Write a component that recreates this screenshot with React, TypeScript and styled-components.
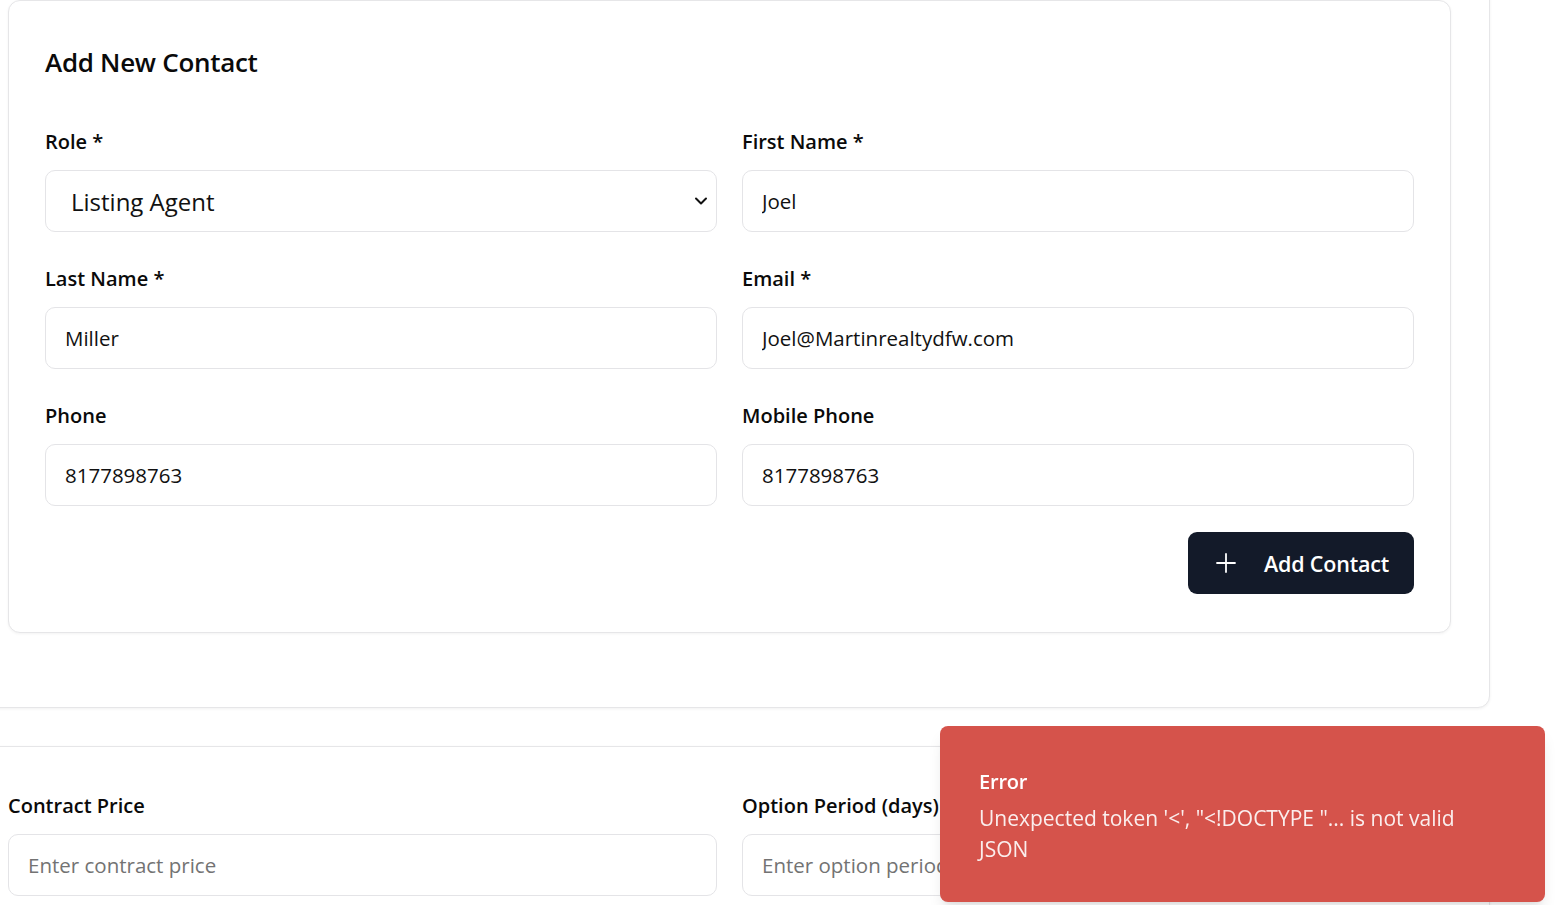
import React from "react";
import styled, { createGlobalStyle } from "styled-components";

const GlobalStyle = createGlobalStyle`
  html, body {
    margin: 0;
    padding: 0;
    background: #ffffff;
    overflow: hidden;
  }
  body {
    font-family: "Open Sans", "Noto Sans", sans-serif;
    color: #0a0a0a;
  }
  * { box-sizing: border-box; }
`;

const Page = styled.div`
  width: 1561px;
  height: 905px;
  overflow: hidden;
  position: relative;
`;

const Stack = styled.div`
  display: flex;
  flex-direction: column;
  gap: 38px;
  width: 1520px;
  margin-left: -30px;
  margin-top: -38px;
`;

const OuterCard = styled.section<{ $bottom: number; $top: number }>`
  background: #fff;
  border: 1px solid #e6e6e8;
  border-radius: 12px;
  box-shadow: 0 1px 3px rgba(0, 0, 0, 0.06);
  padding: ${(p) => p.$top}px 38px ${(p) => p.$bottom}px 37px;
`;

const InnerCard = styled.div`
  background: #fff;
  border: 1px solid #e6e6e8;
  border-radius: 12px;
  box-shadow: 0 1px 3px rgba(0, 0, 0, 0.05);
  padding: 41px 36px 38px 36px;
  display: flex;
  flex-direction: column;
`;

const Title = styled.h2`
  margin: 0 0 44px 0;
  font-size: 26px;
  line-height: 40px;
  font-weight: 600;
  letter-spacing: -0.3px;
  color: #0a0a0a;
`;

const Grid = styled.div`
  display: grid;
  grid-template-columns: 1fr 1fr;
  column-gap: 25px;
  row-gap: 31px;
`;

const Field = styled.div`
  display: flex;
  flex-direction: column;
  gap: 13px;
`;

const Label = styled.label`
  font-size: 20px;
  line-height: 31px;
  font-weight: 600;
  color: #0a0a0a;
`;

const TextInput = styled.input`
  width: 100%;
  height: 62px;
  border: 1px solid #e4e4e7;
  border-radius: 10px;
  padding: 0 19px;
  font-family: "Open Sans", "Noto Sans", sans-serif;
  font-size: 20.5px;
  color: #111111;
  background: #fff;
  outline: none;
  &::placeholder {
    color: #737373;
  }
`;

const SelectWrap = styled.div`
  position: relative;
  width: 100%;
`;

const Select = styled.select`
  width: 100%;
  height: 62px;
  appearance: none;
  -webkit-appearance: none;
  border: 1px solid #e4e4e7;
  border-radius: 10px;
  padding: 0 50px 0 25px;
  font-family: "Open Sans", "Noto Sans", sans-serif;
  font-size: 24px;
  color: #111111;
  background: #fff;
  outline: none;
`;

const Chevron = styled.svg`
  position: absolute;
  right: 8px;
  top: 50%;
  transform: translateY(-50%);
  pointer-events: none;
`;

const Actions = styled.div`
  display: flex;
  justify-content: flex-end;
  margin-top: 26px;
`;

const PrimaryButton = styled.button`
  display: inline-flex;
  align-items: center;
  gap: 28px;
  height: 62px;
  padding: 0 25px 0 28px;
  border: none;
  border-radius: 9px;
  background: #131a29;
  color: #ffffff;
  font-family: "Open Sans", "Noto Sans", sans-serif;
  font-size: 21.5px;
  font-weight: 600;
  letter-spacing: -0.2px;
  cursor: pointer;
`;

const Toast = styled.div`
  position: fixed;
  right: 16px;
  bottom: 3px;
  width: 605px;
  background: #d5534b;
  color: #ffffff;
  border-radius: 8px;
  box-shadow: 0 10px 15px -3px rgba(0, 0, 0, 0.1), 0 4px 6px -4px rgba(0, 0, 0, 0.1);
  padding: 41px 84px 37px 39px;
  display: flex;
  flex-direction: column;
  gap: 6px;
`;

const ToastTitle = styled.div`
  font-size: 20px;
  line-height: 30px;
  font-weight: 600;
  letter-spacing: -0.2px;
`;

const ToastMessage = styled.div`
  font-size: 21px;
  line-height: 31px;
  opacity: 0.9;
`;

const PlusIcon = () => (
  <svg width="20" height="20" viewBox="0 0 20 20" fill="none" stroke="currentColor" strokeWidth="1.8" strokeLinecap="round">
    <path d="M1 10h18M10 1v18" />
  </svg>
);

export default function App() {
  return (
    <Page>
      <GlobalStyle />
      <Stack>
        <OuterCard $top={37} $bottom={74}>
          <InnerCard>
            <Title>Add New Contact</Title>
            <Grid>
              <Field>
                <Label>Role *</Label>
                <SelectWrap>
                  <Select defaultValue="listing">
                    <option value="listing">Listing Agent</option>
                    <option value="buyer">Buyer Agent</option>
                  </Select>
                  <Chevron width="16" height="16" viewBox="0 0 16 16" fill="none" stroke="#111" strokeWidth="2" strokeLinecap="round" strokeLinejoin="round">
                    <path d="M3 5.5l5 5 5-5" />
                  </Chevron>
                </SelectWrap>
              </Field>
              <Field>
                <Label>First Name *</Label>
                <TextInput defaultValue="Joel" />
              </Field>
              <Field>
                <Label>Last Name *</Label>
                <TextInput defaultValue="Miller" />
              </Field>
              <Field>
                <Label>Email *</Label>
                <TextInput defaultValue="Joel@Martinrealtydfw.com" />
              </Field>
              <Field>
                <Label>Phone</Label>
                <TextInput defaultValue="8177898763" />
              </Field>
              <Field>
                <Label>Mobile Phone</Label>
                <TextInput defaultValue="8177898763" />
              </Field>
            </Grid>
            <Actions>
              <PrimaryButton type="button">
                <PlusIcon />
                Add Contact
              </PrimaryButton>
            </Actions>
          </InnerCard>
        </OuterCard>
        <OuterCard $top={43} $bottom={200}>
          <Grid>
            <Field>
              <Label>Contract Price</Label>
              <TextInput placeholder="Enter contract price" />
            </Field>
            <Field>
              <Label>Option Period (days)</Label>
              <TextInput placeholder="Enter option period" />
            </Field>
          </Grid>
        </OuterCard>
      </Stack>
      <Toast role="alert">
        <ToastTitle>Error</ToastTitle>
        <ToastMessage>
          Unexpected token '&lt;', "&lt;!DOCTYPE "... is not valid
          <br />
          JSON
        </ToastMessage>
      </Toast>
    </Page>
  );
}
